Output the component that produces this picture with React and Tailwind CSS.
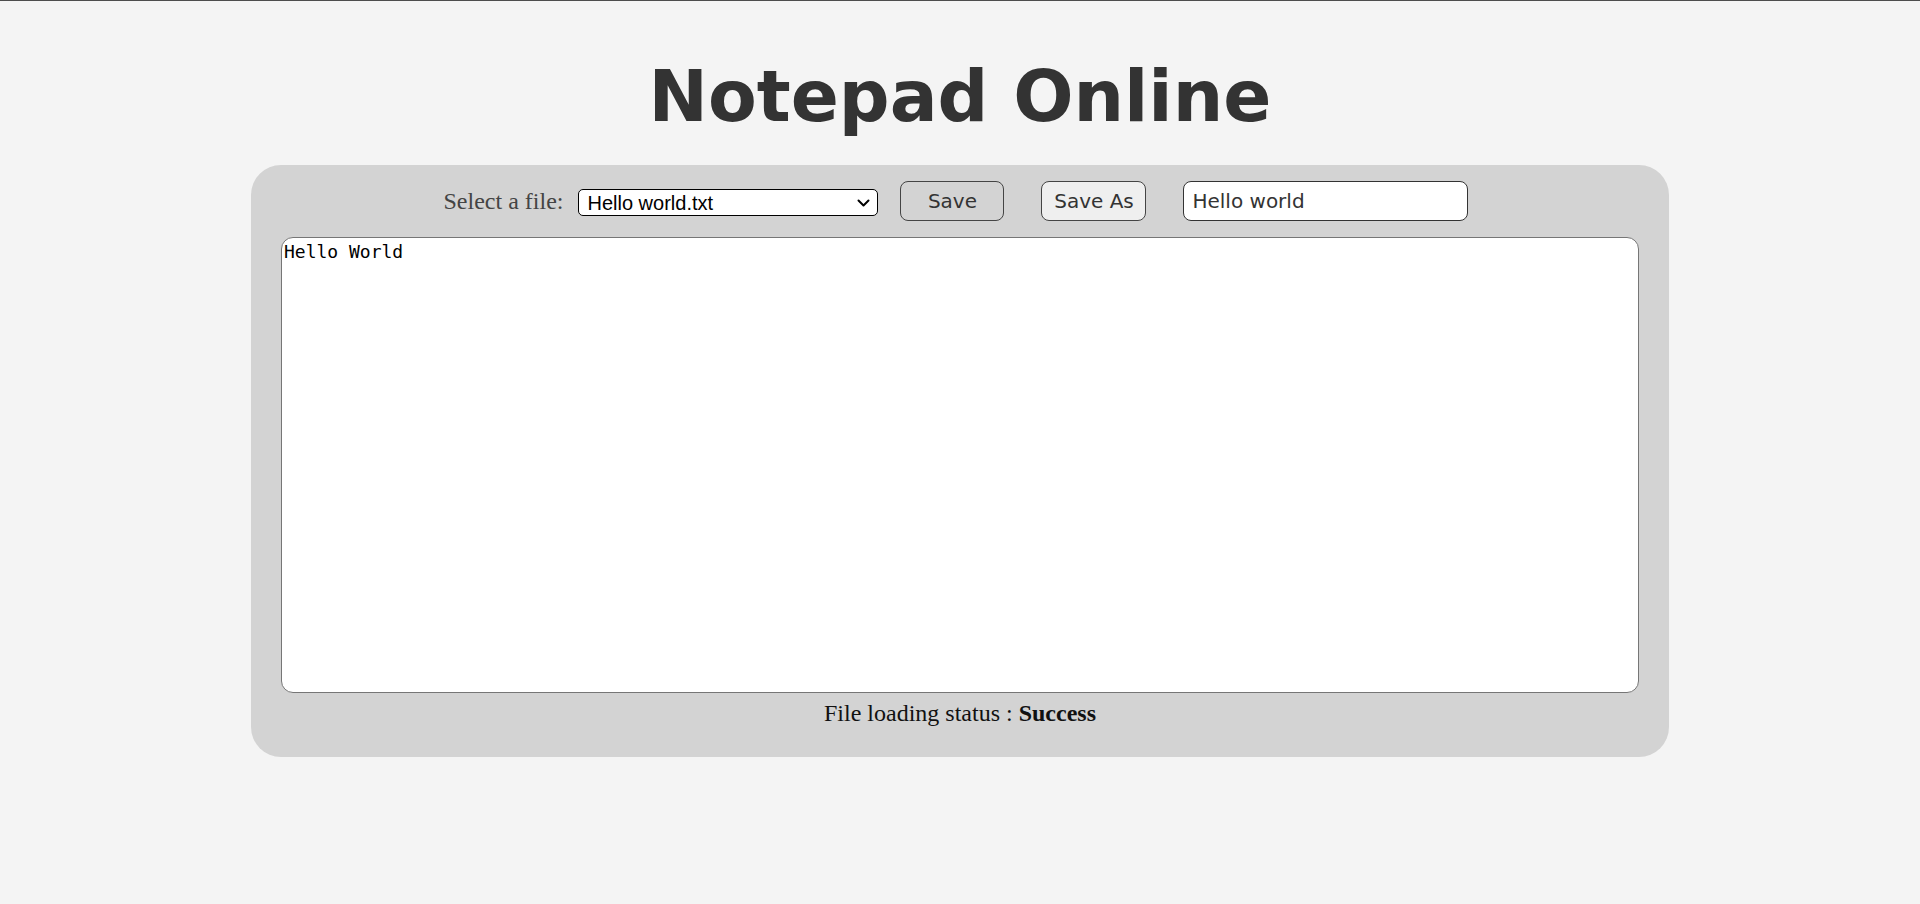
import React from "react";

export default function App() {
  return (
    <div className="min-h-[904px] bg-[#f4f4f4] border-t border-[#4d4d4d]">
      <h1 className="mt-[54px] text-center font-['DejaVu_Sans',Verdana,sans-serif] text-[71px] leading-[84px] font-bold text-[#333333]">
        Notepad Online
      </h1>
      <div className="mx-auto mt-[26px] w-[1418px] rounded-[30px] bg-[#d3d3d3] px-[30px] pt-[16px] pb-[30px]">
        <div className="flex items-center justify-center pr-[8px]">
          <label className="mr-[15px] font-['Liberation_Serif','Times_New_Roman',serif] text-[24px] leading-[28px] text-[#444444]">
            Select a file:
          </label>
          <div className="relative mr-[22px] mt-[3px]">
            <select
              defaultValue="Hello world.txt"
              className="block h-[27px] w-[300px] appearance-none rounded-[5px] border border-black bg-white pl-[8px] pr-[30px] font-['Liberation_Sans',Arial,sans-serif] text-[20px] leading-[24px] text-black outline-none"
            >
              <option>Hello world.txt</option>
            </select>
            <svg
              className="pointer-events-none absolute right-[8px] top-[9px]"
              width="13"
              height="10"
              viewBox="0 0 13 10"
              fill="none"
            >
              <path d="M1.5 2.5 L6.5 7.5 L11.5 2.5" stroke="black" strokeWidth="2" strokeLinecap="round" strokeLinejoin="round" />
            </svg>
          </div>
          <button className="mr-[37px] h-[40px] w-[104px] rounded-[8px] border border-[#444444] bg-[#d3d3d3] font-['DejaVu_Sans',Verdana,sans-serif] text-[20px] text-[#333333]">
            Save
          </button>
          <button className="mr-[37px] h-[40px] w-[105px] rounded-[8px] border border-[#444444] bg-[#efefef] font-['DejaVu_Sans',Verdana,sans-serif] text-[20px] text-[#333333]">
            Save As
          </button>
          <input
            defaultValue="Hello world"
            className="h-[40px] w-[285px] rounded-[8px] border border-[#333333] bg-white pl-[8px] font-['DejaVu_Sans',Verdana,sans-serif] text-[20px] text-[#333333] outline-none"
          />
        </div>
        <textarea
          defaultValue="Hello World"
          className="mt-[16px] block h-[456px] w-full resize-none rounded-[12px] border border-[#767676] bg-white px-[2px] pt-0 pb-[2px] font-['DejaVu_Sans_Mono',monospace] text-[18px] text-black outline-none"
        />
        <div className="mt-[6px] text-center font-['Liberation_Serif','Times_New_Roman',serif] text-[24px] leading-[28px] text-[#111111]">
          File loading status : <b>Success</b>
        </div>
      </div>
    </div>
  );
}
